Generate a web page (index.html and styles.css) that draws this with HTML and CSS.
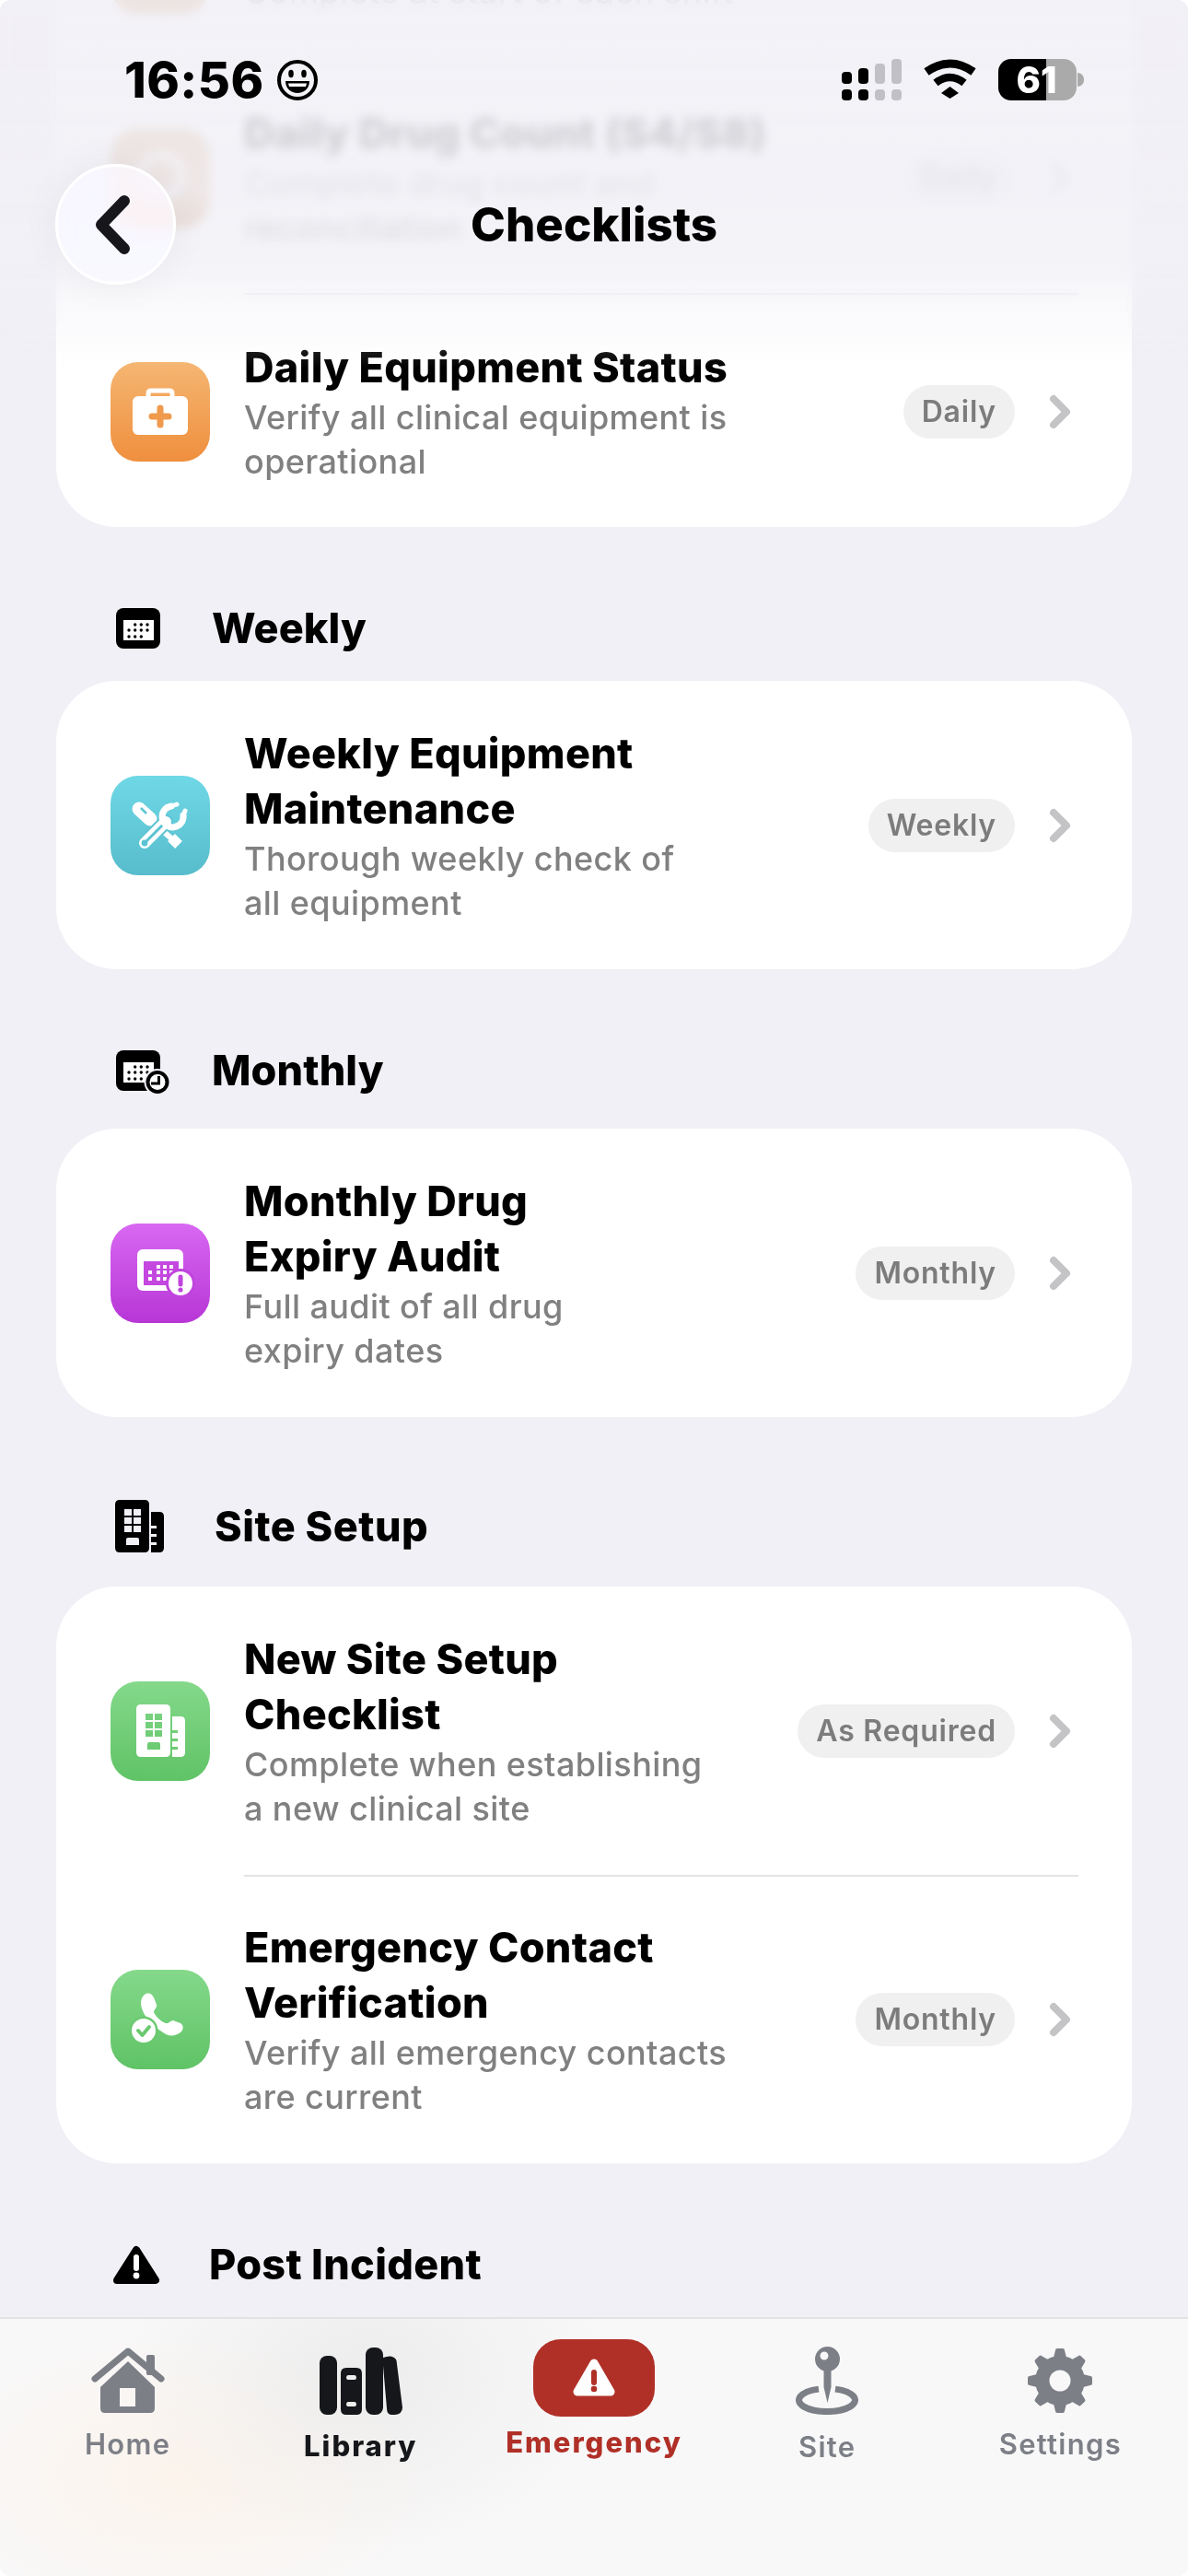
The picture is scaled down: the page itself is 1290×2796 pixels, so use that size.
FILE: index.html
```html
<!DOCTYPE html>
<html lang="en">
<head>
    <meta charset="UTF-8">
    <meta name="viewport" content="width=device-width, initial-scale=1.0">
    <title>Checklists</title>
    <link rel="stylesheet" href="styles.css">
</head>
<body>
    <svg class="sprites" width="0" height="0">
        <symbol id="chevron" viewBox="0 0 24 38">
            <path d="M5 5 L19 19 L5 33" fill="none" stroke="currentColor" stroke-width="8" stroke-linecap="round" stroke-linejoin="round"/>
        </symbol>
        <symbol id="building" viewBox="0 0 53 57">
            <path fill="currentColor" fill-rule="evenodd" d="M5 0 H32 Q37 0 37 5 V52 Q37 57 32 57 H5 Q0 57 0 52 V5 Q0 0 5 0 Z M10 10 V17 H18 V10 Z M20 10 V17 H28 V10 Z M10 19 V26 H18 V19 Z M20 19 V26 H28 V19 Z M10 28 V35 H18 V28 Z M20 28 V35 H28 V28 Z M14 41 Q12 41 12 43 V49 H26 V43 Q26 41 24 41 Z"/>
            <path fill="currentColor" d="M39 13 H48 Q53 13 53 18 V52 Q53 57 48 57 H39 V49 H45 V46 H39 V40 H45 V37 H39 V31 H45 V28 H39 Z"/>
        </symbol>
    </svg>

    <div class="screen">
        <main class="content">
            <section class="card card-first">
                <div class="row row-short">
                    <div class="app-icon icon-tan"></div>
                    <div class="row-text">
                        <div class="row-title">Daily Shift Check</div>
                        <div class="row-sub">Complete at start of each shift</div>
                    </div>
                    <span class="pill">Daily</span>
                    <svg class="chevron"><use href="#chevron"/></svg>
                </div>
                <div class="divider"></div>
                <div class="row row-one-line">
                    <div class="app-icon icon-tan">
                        <svg width="108" height="108" viewBox="0 0 108 108">
                            <circle cx="55" cy="52" r="22" fill="none" stroke="#fff" stroke-width="8"/>
                        </svg>
                    </div>
                    <div class="row-text">
                        <div class="row-title">Daily Drug Count (S4/S8)</div>
                        <div class="row-sub">Complete drug count and<br>reconciliation</div>
                    </div>
                    <span class="pill">Daily</span>
                    <svg class="chevron"><use href="#chevron"/></svg>
                </div>
                <div class="divider"></div>
                <div class="row row-one-line">
                    <div class="app-icon icon-orange">
                        <svg width="108" height="108" viewBox="0 0 108 108">
                            <path d="M41 38 V34 Q41 31 44 31 H64 Q67 31 67 34 V38" fill="none" stroke="#fff" stroke-width="5"/>
                            <rect x="24" y="37" width="60" height="42" rx="6" fill="#fff"/>
                            <path d="M54 50 V68 M45 59 H63" stroke="#f09a4e" stroke-width="7" stroke-linecap="round"/>
                        </svg>
                    </div>
                    <div class="row-text">
                        <div class="row-title">Daily Equipment Status</div>
                        <div class="row-sub">Verify all clinical equipment is<br>operational</div>
                    </div>
                    <span class="pill">Daily</span>
                    <svg class="chevron"><use href="#chevron"/></svg>
                </div>
            </section>

            <h2 class="section-head">
                <svg class="head-icon" width="48" height="44" viewBox="0 0 48 44">
                    <rect width="48" height="44" rx="8"/>
                    <rect x="8" y="13" width="33" height="22" fill="#fff"/>
                    <g>
                        <circle cx="20.7" cy="18" r="1.7"/><circle cx="27.3" cy="18" r="1.7"/><circle cx="34" cy="18" r="1.7"/>
                        <circle cx="14" cy="24" r="1.7"/><circle cx="20.7" cy="24" r="1.7"/><circle cx="27.3" cy="24" r="1.7"/><circle cx="34" cy="24" r="1.7"/>
                        <circle cx="14" cy="31" r="1.7"/><circle cx="20.7" cy="31" r="1.7"/><circle cx="27.3" cy="31" r="1.7"/>
                    </g>
                </svg>
                Weekly
            </h2>
            <section class="card">
                <div class="row">
                    <div class="app-icon icon-teal">
                        <svg width="108" height="108" viewBox="0 0 108 108">
                            <path d="M31 36 L43 47" stroke="#fff" stroke-width="15" stroke-linecap="round"/>
                            <path d="M33 35 L39 41" stroke="#5fc6d5" stroke-width="2.5"/>
                            <path d="M50 54 L66 68" stroke="#fff" stroke-width="6"/>
                            <path d="M66 67 L74 75" stroke="#fff" stroke-width="11" stroke-linejoin="round"/>
                            <path d="M38 72 L60 50" stroke="#5fc6d5" stroke-width="16" stroke-linecap="round"/>
                            <path d="M37 73 L60 50" stroke="#fff" stroke-width="12" stroke-linecap="round"/>
                            <path d="M38 72 L58 52" stroke="#5ac3d1" stroke-width="3" stroke-linecap="round"/>
                            <circle cx="37" cy="73" r="3.4" fill="#5ac3d1"/>
                            <path d="M66 33 A11.5 11.5 0 1 0 79 43" fill="none" stroke="#fff" stroke-width="7" stroke-linecap="round"/>
                            <path d="M66 33 L72 31 M79 43 L81 38" stroke="#fff" stroke-width="5" stroke-linecap="round"/>
                        </svg>
                    </div>
                    <div class="row-text">
                        <div class="row-title">Weekly Equipment<br>Maintenance</div>
                        <div class="row-sub">Thorough weekly check of<br>all equipment</div>
                    </div>
                    <span class="pill">Weekly</span>
                    <svg class="chevron"><use href="#chevron"/></svg>
                </div>
            </section>

            <h2 class="section-head section-monthly">
                <svg class="head-icon" width="58" height="47" viewBox="0 0 58 47">
                    <rect width="48" height="44" rx="8"/>
                    <rect x="8" y="13" width="33" height="22" fill="#fff"/>
                    <g>
                        <circle cx="20.7" cy="18" r="1.7"/><circle cx="27.3" cy="18" r="1.7"/><circle cx="34" cy="18" r="1.7"/>
                        <circle cx="14" cy="24" r="1.7"/><circle cx="20.7" cy="24" r="1.7"/><circle cx="27.3" cy="24" r="1.7"/><circle cx="34" cy="24" r="1.7"/>
                        <circle cx="14" cy="31" r="1.7"/><circle cx="20.7" cy="31" r="1.7"/><circle cx="27.3" cy="31" r="1.7"/>
                    </g>
                    <circle cx="45" cy="34.5" r="14.5" fill="#f1f0f6"/>
                    <circle cx="45" cy="34.5" r="12.5"/>
                    <circle cx="45" cy="34.5" r="8.5" fill="#fff"/>
                    <path d="M46.5 28 V36 H38" fill="none" stroke="#000" stroke-width="3"/>
                </svg>
                Monthly
            </h2>
            <section class="card">
                <div class="row">
                    <div class="app-icon icon-purple">
                        <svg width="108" height="108" viewBox="0 0 108 108">
                            <rect x="29" y="28" width="50" height="45" rx="6" fill="#fff"/>
                            <rect x="36" y="41" width="38" height="26" fill="#c447e0"/>
                            <g fill="#fff">
                                <rect x="50" y="45" width="4" height="4"/><rect x="57" y="45" width="4" height="4"/><rect x="64" y="45" width="4" height="4"/>
                                <rect x="41" y="51" width="4" height="4"/><rect x="50" y="51" width="4" height="4"/><rect x="57" y="51" width="4" height="4"/><rect x="64" y="51" width="4" height="4"/>
                                <rect x="41" y="58" width="4" height="4"/><rect x="50" y="58" width="4" height="4"/><rect x="57" y="58" width="4" height="4"/>
                            </g>
                            <circle cx="76" cy="65" r="16" fill="#c044dd"/>
                            <circle cx="76" cy="65" r="13" fill="#fff"/>
                            <path d="M76 58 V66" stroke="#c044dd" stroke-width="5" stroke-linecap="round"/>
                            <circle cx="76" cy="72" r="2.6" fill="#c044dd"/>
                        </svg>
                    </div>
                    <div class="row-text">
                        <div class="row-title">Monthly Drug<br>Expiry Audit</div>
                        <div class="row-sub">Full audit of all drug<br>expiry dates</div>
                    </div>
                    <span class="pill">Monthly</span>
                    <svg class="chevron"><use href="#chevron"/></svg>
                </div>
            </section>

            <h2 class="section-head section-site">
                <svg class="head-icon" width="53" height="57"><use href="#building"/></svg>
                Site Setup
            </h2>
            <section class="card">
                <div class="row">
                    <div class="app-icon icon-green">
                        <svg class="building-small" width="53" height="57"><use href="#building"/></svg>
                    </div>
                    <div class="row-text">
                        <div class="row-title">New Site Setup<br>Checklist</div>
                        <div class="row-sub">Complete when establishing<br>a new clinical site</div>
                    </div>
                    <span class="pill">As Required</span>
                    <svg class="chevron"><use href="#chevron"/></svg>
                </div>
                <div class="divider"></div>
                <div class="row">
                    <div class="app-icon icon-green">
                        <svg width="108" height="108" viewBox="0 0 108 108">
                            <path fill="#fff" d="M37 27 C41 24 45 26 47 30 L50 38 C51 41 47 43 47 46 C50 52 55 56 60 58 C63 59 65 55 68 55 L76 58 C80 60 79 66 76 68 C70 72 63 73 57 68 C47 62 37 52 34 42 C32 36 33 30 37 27 Z"/>
                            <circle cx="36" cy="66" r="15.5" fill="#6bc970"/>
                            <circle cx="36" cy="66" r="13" fill="#fff"/>
                            <path d="M30 66 L34.5 71 L42 62" fill="none" stroke="#6bc970" stroke-width="4" stroke-linecap="round" stroke-linejoin="round"/>
                        </svg>
                    </div>
                    <div class="row-text">
                        <div class="row-title">Emergency Contact<br>Verification</div>
                        <div class="row-sub">Verify all emergency contacts<br>are current</div>
                    </div>
                    <span class="pill">Monthly</span>
                    <svg class="chevron"><use href="#chevron"/></svg>
                </div>
            </section>

            <h2 class="section-head section-post">
                <svg class="head-icon" width="50" height="44" viewBox="0 0 50 44">
                    <path d="M25 6 L46 39 H4 Z" stroke="#000" stroke-width="8" stroke-linejoin="round"/>
                    <path d="M25 14 V26" stroke="#fff" stroke-width="6" stroke-linecap="round"/>
                    <circle cx="25" cy="34" r="3.4" fill="#fff"/>
                </svg>
                Post Incident
            </h2>
        </main>

        <!-- blurred strip the list scrolls under -->
        <div class="header-blur"></div>
        <div class="header-tint"></div>

        <div class="status-bar">
            <div class="status-time">
                16:56
                <svg width="44" height="44" viewBox="0 0 44 44">
                    <circle cx="22" cy="22" r="20" fill="none" stroke="#000" stroke-width="4"/>
                    <ellipse cx="15" cy="15" rx="2.8" ry="4.2"/>
                    <ellipse cx="29" cy="15" rx="2.8" ry="4.2"/>
                    <path d="M9 23 H35 C35 31 29 36 22 36 C15 36 9 31 9 23 Z"/>
                    <path d="M12 25.5 H32 L31 29 H13 Z" fill="#fff"/>
                </svg>
            </div>
            <div class="status-right">
                <svg width="66" height="45" viewBox="0 0 66 45">
                    <g fill="#000">
                        <rect x="0" y="14" width="11" height="13" rx="4"/><rect x="18" y="10" width="11" height="17" rx="4"/>
                        <rect x="0" y="33" width="11" height="12" rx="4"/><rect x="18" y="33" width="11" height="12" rx="4"/>
                    </g>
                    <g fill="#c1c0c6">
                        <rect x="36" y="5" width="11" height="22" rx="4"/><rect x="54" y="0" width="11" height="27" rx="4"/>
                        <rect x="36" y="33" width="11" height="12" rx="4"/><rect x="54" y="33" width="11" height="12" rx="4"/>
                    </g>
                </svg>
                <svg width="58" height="43" viewBox="0 0 58 43">
                    <path d="M3 14 Q28.5 -4 54 14" fill="none" stroke="#000" stroke-width="9"/>
                    <path d="M13 26 Q28.5 14 44 26" fill="none" stroke="#000" stroke-width="8.5"/>
                    <path d="M19 37 L28.5 30 L38 37 L28.5 43 Z"/>
                </svg>
                <div class="battery">
                    <span class="battery-level">61</span>
                </div>
            </div>
        </div>

        <button class="back-btn">
            <svg width="44" height="66" viewBox="0 0 44 66">
                <path d="M35 7 L10 33 L35 59" fill="none" stroke="#17171b" stroke-width="12" stroke-linecap="round" stroke-linejoin="round"/>
            </svg>
        </button>
        <h1 class="page-title">Checklists</h1>

        <nav class="tab-bar">
            <div class="tab">
                <div class="tab-icon">
                    <svg width="80" height="72" viewBox="0 0 80 72">
                        <rect x="60" y="8" width="9" height="22" rx="2"/>
                        <path d="M4 34 L40 4 L76 34" fill="none" stroke="#7d7f87" stroke-width="7" stroke-linecap="round" stroke-linejoin="round"/>
                        <path fill-rule="evenodd" d="M40 15 L69 43 V66 Q69 71 64 71 H15 Q10 71 10 66 V43 Z M31 44 V64 H48 V44 Z"/>
                    </svg>
                </div>
                <span class="tab-label">Home</span>
            </div>
            <div class="tab tab-library">
                <div class="tab-icon">
                    <svg width="90" height="73" viewBox="0 0 90 73">
                        <rect x="0" y="9" width="19" height="64" rx="8"/>
                        <path fill-rule="evenodd" d="M29 22 H40 Q46 22 46 28 V67 Q46 73 40 73 H29 Q23 73 23 67 V28 Q23 22 29 22 Z M31 30 Q29 30 29 32.5 Q29 35 31 35 H38 Q40 35 40 32.5 Q40 30 38 30 Z M31 59 Q29 59 29 61.5 Q29 64 31 64 H38 Q40 64 40 61.5 Q40 59 38 59 Z"/>
                        <rect x="50" y="0" width="19" height="73" rx="8"/>
                        <path d="M69 11 Q79 7 83 13 Q84 15 84 18 L90 65 Q90 72 82 73 H78 Q73 73 73 66 L69 20 Z"/>
                    </svg>
                </div>
                <span class="tab-label">Library</span>
            </div>
            <div class="tab tab-emergency">
                <div class="tab-icon">
                    <div class="emergency-pill">
                        <svg width="46" height="42" viewBox="0 0 46 42">
                            <path d="M23 5 L41 36 H5 Z" fill="#fff" stroke="#fff" stroke-width="9" stroke-linejoin="round"/>
                            <path d="M23 15 V26" stroke="#b03027" stroke-width="6" stroke-linecap="round"/>
                            <circle cx="23" cy="33" r="3.3" fill="#b03027"/>
                        </svg>
                    </div>
                </div>
                <span class="tab-label">Emergency</span>
            </div>
            <div class="tab tab-site">
                <div class="tab-icon">
                    <svg width="68" height="74" viewBox="0 0 68 74">
                        <path fill-rule="evenodd" d="M21 13.5 A13.5 13.5 0 1 1 48 13.5 A13.5 13.5 0 1 1 21 13.5 Z M26.5 10 A4.5 4.5 0 1 0 35.5 10 A4.5 4.5 0 1 0 26.5 10 Z"/>
                        <path d="M30.5 24 H38.5 V44 L34.5 61 L30.5 44 Z"/>
                        <path d="M25 46.1 A30.5 12.5 0 1 0 43 46.1" fill="none" stroke="#7d7f87" stroke-width="7"/>
                    </svg>
                </div>
                <span class="tab-label">Site</span>
            </div>
            <div class="tab">
                <div class="tab-icon">
                    <svg width="70" height="70" viewBox="0 0 70 70">
                        <defs><path id="tooth" d="M28 10 L30 2 Q30 0 32 0 H38 Q40 0 40 2 L42 10 Z"/></defs>
                        <use href="#tooth"/>
                        <use href="#tooth" transform="rotate(45 35 35)"/>
                        <use href="#tooth" transform="rotate(90 35 35)"/>
                        <use href="#tooth" transform="rotate(135 35 35)"/>
                        <use href="#tooth" transform="rotate(180 35 35)"/>
                        <use href="#tooth" transform="rotate(225 35 35)"/>
                        <use href="#tooth" transform="rotate(270 35 35)"/>
                        <use href="#tooth" transform="rotate(315 35 35)"/>
                        <path fill-rule="evenodd" d="M35 8 A27 27 0 1 1 35 62 A27 27 0 1 1 35 8 Z M35 23.5 A11.5 11.5 0 1 0 35 46.5 A11.5 11.5 0 1 0 35 23.5 Z"/>
                    </svg>
                </div>
                <span class="tab-label">Settings</span>
            </div>
        </nav>
    </div>
</body>
</html>
```

FILE: styles.css
```css
* {
    margin: 0;
    padding: 0;
    box-sizing: border-box;
}

body {
    font-family: Inter, 'Noto Sans', sans-serif;
    background: #fff;
    color: #000;
}

.sprites {
    position: absolute;
}

.screen {
    position: relative;
    width: 1290px;
    height: 2796px;
    overflow: hidden;
    background: #f1f0f6;
    border-radius: 12px;
}

.content {
    padding: 0 61px;
}

.card {
    background: #fff;
    border-radius: 66px;
}

.card-first {
    margin-top: -142px;
}

.row {
    display: flex;
    align-items: center;
    padding: 48.5px 66px 48.5px 59px;
}

.row-short {
    padding-top: 49px;
    padding-bottom: 49px;
}

.row-one-line {
    padding-top: 51px;
    padding-bottom: 47px;
}

.divider {
    height: 2px;
    margin: 0 58px -2px 204px;
    background: #e4e4e8;
}

.app-icon {
    flex: none;
    width: 108px;
    height: 108px;
    border-radius: 30px;
    margin-right: 37px;
    display: flex;
    align-items: center;
    justify-content: center;
}

.icon-orange {
    background: linear-gradient(180deg, #f5b672 0%, #ef8f3e 100%);
}

.icon-tan {
    background: linear-gradient(180deg, #d9a878 0%, #c98850 100%);
}

.icon-teal {
    background: linear-gradient(180deg, #6fd8e6 0%, #57bccb 100%);
}

.icon-purple {
    background: linear-gradient(180deg, #d868f2 0%, #b736d6 100%);
}

.icon-green {
    background: linear-gradient(180deg, #84d98a 0%, #60c366 100%);
}

.building-small {
    color: #fff;
}

.row-text {
    flex: 1;
    min-width: 0;
}

.row-title {
    font-size: 45px;
    font-weight: 800;
    line-height: 60px;
    letter-spacing: 0.3px;
}

.row-sub {
    font-size: 36px;
    font-weight: 500;
    line-height: 48px;
    letter-spacing: 0.4px;
    color: #808080;
}

.pill {
    flex: none;
    height: 58px;
    line-height: 58px;
    padding: 0 20px;
    border-radius: 29px;
    background: #f0f0f1;
    color: #7c7c7c;
    font-size: 32px;
    font-weight: 600;
    letter-spacing: 0.8px;
}

.chevron {
    flex: none;
    width: 24px;
    height: 38px;
    margin-left: 37px;
    color: #c4c4c6;
}

.section-head {
    display: flex;
    align-items: flex-start;
    margin: 88px 0 35px 65px;
    font-size: 45px;
    font-weight: 800;
    line-height: 44px;
    letter-spacing: 0.1px;
}

.head-icon {
    flex: none;
    margin-right: 56px;
}

.section-monthly {
    margin-bottom: 38px;
}

.section-monthly .head-icon {
    margin-right: 46px;
}

.section-site {
    align-items: center;
    margin-top: 90px;
    margin-bottom: 37px;
    margin-left: 64px;
    letter-spacing: 0.5px;
}

.section-site .head-icon {
    margin-right: 55px;
}

.section-post {
    margin-left: 62px;
    letter-spacing: 0.3px;
}

.section-post .head-icon {
    margin-right: 54px;
}

.header-blur {
    position: absolute;
    top: 0;
    left: 0;
    right: 0;
    height: 400px;
    backdrop-filter: blur(6px);
    -webkit-mask-image: linear-gradient(180deg, #000 270px, transparent 370px);
    mask-image: linear-gradient(180deg, #000 270px, transparent 370px);
}

.header-tint {
    position: absolute;
    top: 0;
    left: 0;
    right: 0;
    height: 400px;
    background: linear-gradient(180deg, rgba(241, 240, 246, 0.88) 0, rgba(241, 240, 246, 0.86) 150px, rgba(241, 240, 246, 0.9) 205px, rgba(241, 240, 246, 0.84) 240px, rgba(241, 240, 246, 0.82) 273px, rgba(241, 240, 246, 0.68) 300px, rgba(241, 240, 246, 0.43) 327px, rgba(241, 240, 246, 0.26) 360px, rgba(241, 240, 246, 0.07) 387px, rgba(241, 240, 246, 0) 400px);
}

.status-bar {
    position: absolute;
    top: 64px;
    left: 135px;
    right: 121px;
    display: flex;
    justify-content: space-between;
    align-items: flex-start;
}

.status-time {
    display: flex;
    align-items: center;
    gap: 14px;
    font-size: 54px;
    font-weight: 800;
    line-height: 46px;
    letter-spacing: 0.4px;
}

.status-right {
    display: flex;
    align-items: flex-start;
    gap: 23px;
}

.battery {
    position: relative;
    width: 85px;
    height: 45px;
    border-radius: 14px;
    background: linear-gradient(90deg, #000 0, #000 52px, #aaa 52px);
    color: #fff;
    font-size: 40px;
    font-weight: 800;
    line-height: 45px;
    text-align: center;
}

.battery::after {
    content: "";
    position: absolute;
    left: 86px;
    top: 15px;
    width: 7px;
    height: 15px;
    border-radius: 0 8px 8px 0;
    background: #aaa;
}

.battery-level {
    position: relative;
    left: -1px;
}

.back-btn {
    position: absolute;
    left: 60px;
    top: 178px;
    width: 131px;
    height: 131px;
    border: 3px solid #fff;
    border-radius: 50%;
    background: rgba(250, 250, 255, 0.72);
    backdrop-filter: blur(8px) saturate(3);
    box-shadow: 0 0 44px rgba(0, 0, 0, 0.05);
    display: flex;
    align-items: center;
    justify-content: center;
}

.back-btn svg {
    margin-left: -8px;
}

.page-title {
    position: absolute;
    top: 214px;
    left: 0;
    right: 0;
    text-align: center;
    font-size: 51px;
    font-weight: 800;
    line-height: 60px;
}

.tab-bar {
    position: absolute;
    left: 0;
    right: 0;
    bottom: 0;
    height: 281px;
    padding: 22px 12px 0;
    display: flex;
    border-top: 2px solid #e2e2e4;
    background:
        radial-gradient(ellipse 260px 190px at 400px 60px, rgba(232, 232, 232, 0.7), rgba(232, 232, 232, 0) 100%),
        radial-gradient(ellipse 300px 170px at 200px 170px, rgba(255, 240, 225, 0.55), rgba(255, 240, 225, 0) 100%),
        #f8f8f9;
}

.tab {
    flex: 1;
    display: flex;
    flex-direction: column;
    align-items: center;
    fill: #7d7f87;
    color: #7d7f87;
}

.tab-icon {
    height: 90px;
    display: flex;
    align-items: center;
    justify-content: center;
}

.tab-label {
    margin-top: 4px;
    font-size: 31px;
    font-weight: 600;
    line-height: 40px;
    letter-spacing: 1.3px;
}

.tab-library {
    fill: #15171a;
    color: #15171a;
}

.tab-library .tab-label {
    margin-top: 6px;
    font-weight: 800;
    letter-spacing: 2px;
}

.tab-emergency {
    color: #b03027;
}

.tab-emergency .tab-icon {
    align-items: flex-start;
}

.tab-emergency .tab-label {
    margin-top: 2px;
    font-weight: 800;
    letter-spacing: 2px;
}

.tab-site .tab-label {
    margin-top: 7px;
}

.emergency-pill {
    width: 132px;
    height: 84px;
    border-radius: 30px;
    background: #b03027;
    display: flex;
    align-items: center;
    justify-content: center;
}
```
